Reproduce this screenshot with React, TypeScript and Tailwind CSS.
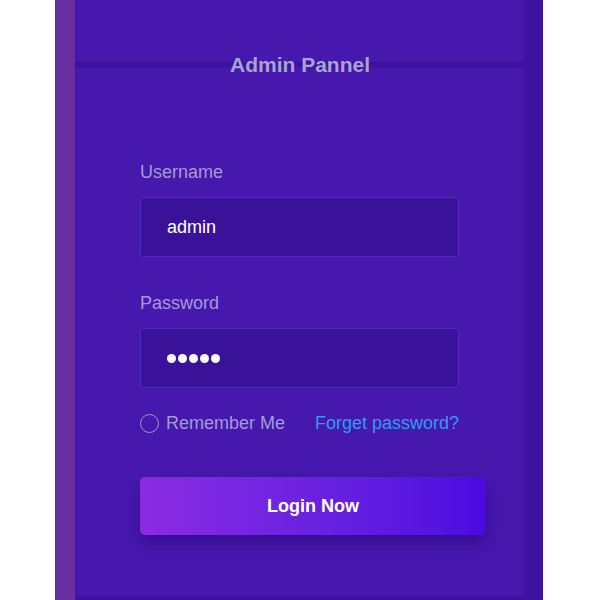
import React from "react";

const font = { fontFamily: '"Liberation Sans", Arial, sans-serif' };

const Field = ({ label, children }: { label: string; children: React.ReactNode }) => (
  <div className="flex flex-col">
    <label className="text-[18px] leading-[21px] text-[#a49bd6]">{label}</label>
    <div className="mt-[14px] flex h-[60px] w-[319px] items-center rounded-[3px] border border-[#5227c2] bg-[#3a1299] pl-[26px]">
      {children}
    </div>
  </div>
);

export default function App() {
  return (
    <div className="h-[600px] w-[600px] bg-white" style={font}>
      <div className="ml-[55px] flex h-[600px] w-[488px]">
        <div className="w-[20px] bg-gradient-to-r from-[#6b31a1] to-[#682e9f]" />
        <div className="relative flex w-[450px] flex-col bg-[#4618ae] shadow-[inset_0_-3px_3px_rgba(40,10,110,0.35)]">
          <div className="h-[62px]" />
          <div className="h-[4px] bg-[#3b12a0] shadow-[0_1px_2px_rgba(30,5,90,0.3)]" />
          <h1 className="-mt-[13px] text-center text-[21px] font-bold leading-[24px] text-[#a9a3d2]">
            Admin Pannel
          </h1>

          <div className="mt-[85px] flex flex-col pl-[65px]">
            <Field label="Username">
              <span className="text-[18px] text-white">admin</span>
            </Field>
            <div className="mt-[36px]">
              <Field label="Password">
                <div className="flex gap-[2px]">
                  {[0, 1, 2, 3, 4].map((i) => (
                    <span key={i} className="h-[9px] w-[9px] rounded-full bg-white" />
                  ))}
                </div>
              </Field>
            </div>

            <div className="mt-[25px] flex w-[319px] items-center justify-between text-[18px] leading-[21px]">
              <div className="flex items-center gap-[7px]">
                <span className="h-[19px] w-[19px] rounded-full border-[1.5px] border-[#9d93cf]" />
                <span className="text-[#a49bd6]">Remember Me</span>
              </div>
              <span className="text-[#2f9cf2]">Forget password?</span>
            </div>

            <button className="mt-[43px] h-[58px] w-[346px] rounded-[5px] bg-gradient-to-r from-[#8a2be2] to-[#4c08df] text-[18px] font-bold text-white shadow-[0_8px_14px_rgba(40,8,120,0.55)]">
              Login Now
            </button>
          </div>
        </div>
        <div className="w-[18px] bg-[#3e139f]" />
      </div>
    </div>
  );
}
